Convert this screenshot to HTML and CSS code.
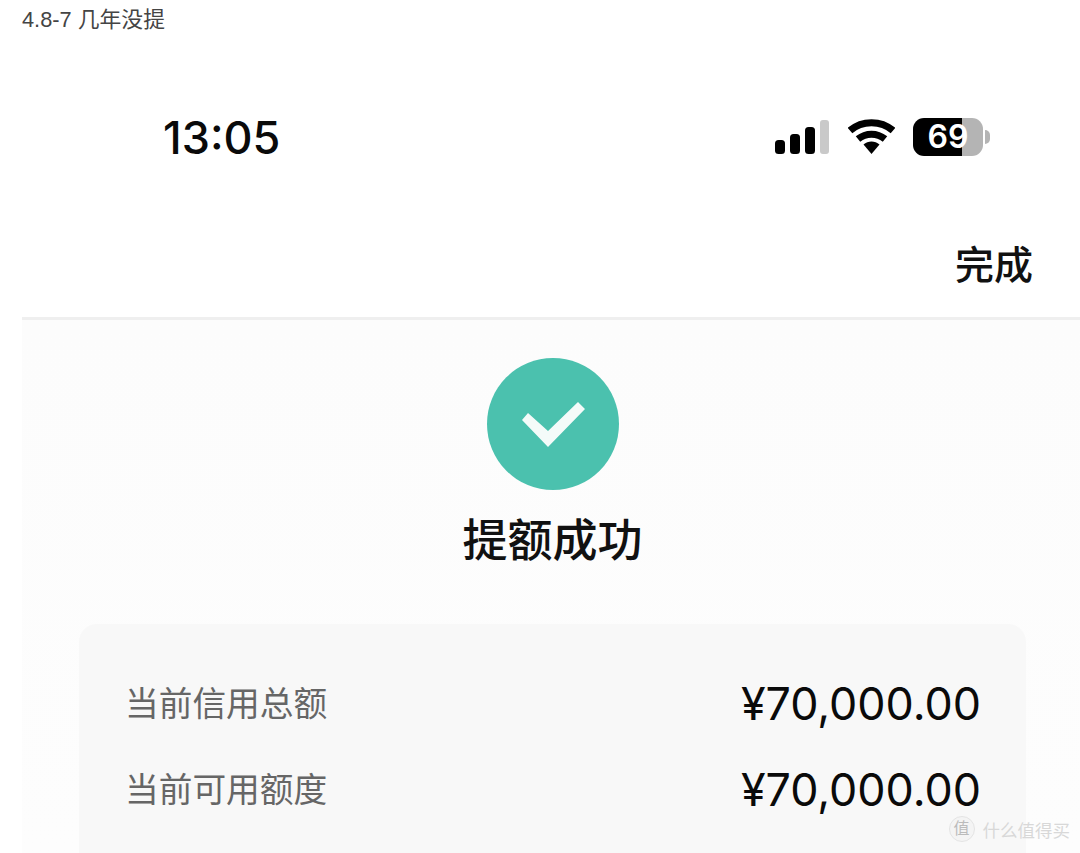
FILE: index.html
```html
<!DOCTYPE html>
<html lang="zh-CN">
<head>
  <meta charset="UTF-8">
  <meta name="viewport" content="width=device-width, initial-scale=1.0">
  <title>提额成功</title>
  <link rel="stylesheet" href="styles.css">
</head>
<body>
  <p class="caption">4.8-7 几年没提</p>

  <div class="phone">
    <div class="status-bar">
      <span class="time">13:05</span>
      <div class="status-icons">
        <svg class="signal" width="54" height="34" viewBox="0 0 54 34">
          <rect x="0" y="20" width="10" height="14" rx="3.500" fill="#000"/>
          <rect x="15" y="14" width="10" height="20" rx="3.500" fill="#000"/>
          <rect x="30" y="7" width="10" height="27" rx="3.500" fill="#000"/>
          <rect x="45" y="0" width="9" height="34" rx="3" fill="#c9c9c9"/>
        </svg>
        <svg class="wifi" width="47" height="36" viewBox="0 0 47 36">
          <path d="M2 11.500C14 1 33 1 45 11.500" fill="none" stroke="#000" stroke-width="7"/>
          <path d="M10 20C18 13.500 29 13.500 37 20" fill="none" stroke="#000" stroke-width="7"/>
          <path d="M15.500 25.500C20 21.500 27 21.500 31.500 25.500L23.500 35Z" fill="#000"/>
        </svg>
        <div class="battery">
          <div class="battery-body">
            <span class="battery-level">69</span>
          </div>
          <div class="battery-tip"></div>
        </div>
      </div>
    </div>

    <div class="nav-bar">
      <span class="done">完成</span>
    </div>

    <div class="content">
      <div class="success-icon">
        <svg width="132" height="132" viewBox="0 0 132 132">
          <polygon points="35,62 41,55 61,73 91,44 98,51 61,89" fill="#f4fbf9"/>
        </svg>
      </div>
      <h1 class="title">提额成功</h1>

      <div class="credit-card">
        <div class="credit-row">
          <span class="credit-label">当前信用总额</span>
          <span class="credit-value">¥70,000.00</span>
        </div>
        <div class="credit-row">
          <span class="credit-label">当前可用额度</span>
          <span class="credit-value">¥70,000.00</span>
        </div>
      </div>
    </div>
  </div>

  <div class="watermark">
    <span class="watermark-badge">值</span>
    <span>什么值得买</span>
  </div>
</body>
</html>
```

FILE: styles.css
```css
html,
body {
  height: 100%;
}

body {
  font-family: "Liberation Sans", "Noto Sans CJK SC", sans-serif;
  margin: 0;
  padding: 0;
  background: white;
  overflow: hidden;
  position: relative;
}

.caption {
  margin: 0;
  padding: 8px 0 0 22px;
  height: 30px;
  font-size: 21.800px;
  line-height: 24px;
  color: #444;
}

.phone {
  margin-left: 22px;
}

.status-bar {
  display: flex;
  justify-content: space-between;
  align-items: center;
  height: 169px;
  padding: 30px 90px 0 141px;
  box-sizing: border-box;
}

.time {
  font-family: Inter, "Liberation Sans", sans-serif;
  font-size: 45px;
  font-weight: 500;
  color: #0a0a0a;
}

.status-icons {
  display: flex;
  align-items: center;
  gap: 19px;
  margin-top: -2px;
}

.wifi {
  margin-right: -1px;
}

.battery {
  display: flex;
  align-items: center;
  gap: 2px;
}

.battery-body {
  width: 70px;
  height: 38px;
  border-radius: 11px;
  background: linear-gradient(90deg, #000 0%, #000 70%, #b4b4b4 70%, #b4b4b4 100%);
  display: flex;
  align-items: center;
  justify-content: center;
}

.battery-level {
  font-family: Inter, "Liberation Sans", sans-serif;
  font-size: 32px;
  font-weight: 600;
  color: white;
}

.battery-tip {
  width: 5px;
  height: 14px;
  border-radius: 0 5px 5px 0;
  background: #b4b4b4;
}

.nav-bar {
  display: flex;
  justify-content: flex-end;
  align-items: center;
  height: 110px;
  padding-right: 47px;
  border-bottom: 3px solid #efefef;
}

.done {
  font-size: 39px;
  font-weight: 500;
  color: #111;
}

.content {
  display: flex;
  flex-direction: column;
  align-items: center;
  padding-top: 38px;
  padding-left: 3px;
  background: linear-gradient(180deg, #fcfcfc 0%, #fdfdfd 100%);
  height: 535px;
  box-sizing: border-box;
  overflow: hidden;
}

.success-icon {
  flex-shrink: 0;
  width: 132px;
  height: 132px;
  border-radius: 50%;
  background: #4bc1ae;
}

.success-icon svg {
  display: block;
}

.title {
  margin: 25px 0 0 0;
  font-size: 45px;
  line-height: 54px;
  font-weight: 500;
  color: #111;
}

.credit-card {
  flex-shrink: 0;
  align-self: flex-start;
  margin: 55px 0 0 54px;
  width: 947px;
  height: 260px;
  box-sizing: border-box;
  padding: 37px 45px 0 46px;
  background: #f8f8f8;
  border-radius: 18px;
}

.credit-row {
  display: flex;
  justify-content: space-between;
  align-items: center;
  height: 86px;
}

.credit-label {
  padding-bottom: 6px;
  font-size: 33.700px;
  color: #666;
}

.credit-value {
  font-family: Inter, "Liberation Sans", sans-serif;
  font-size: 44.800px;
  font-weight: 400;
  color: #0a0a0a;
}

.watermark {
  position: absolute;
  right: 10px;
  bottom: 11px;
  display: flex;
  align-items: center;
  gap: 8px;
  font-size: 17.500px;
  color: #d8d8d8;
}

.watermark-badge {
  width: 24px;
  height: 24px;
  border-radius: 50%;
  background: #f4f4f4;
  border: 1px solid #e4e4e4;
  color: #bbb;
  font-size: 16px;
  line-height: 24px;
  text-align: center;
}
```
